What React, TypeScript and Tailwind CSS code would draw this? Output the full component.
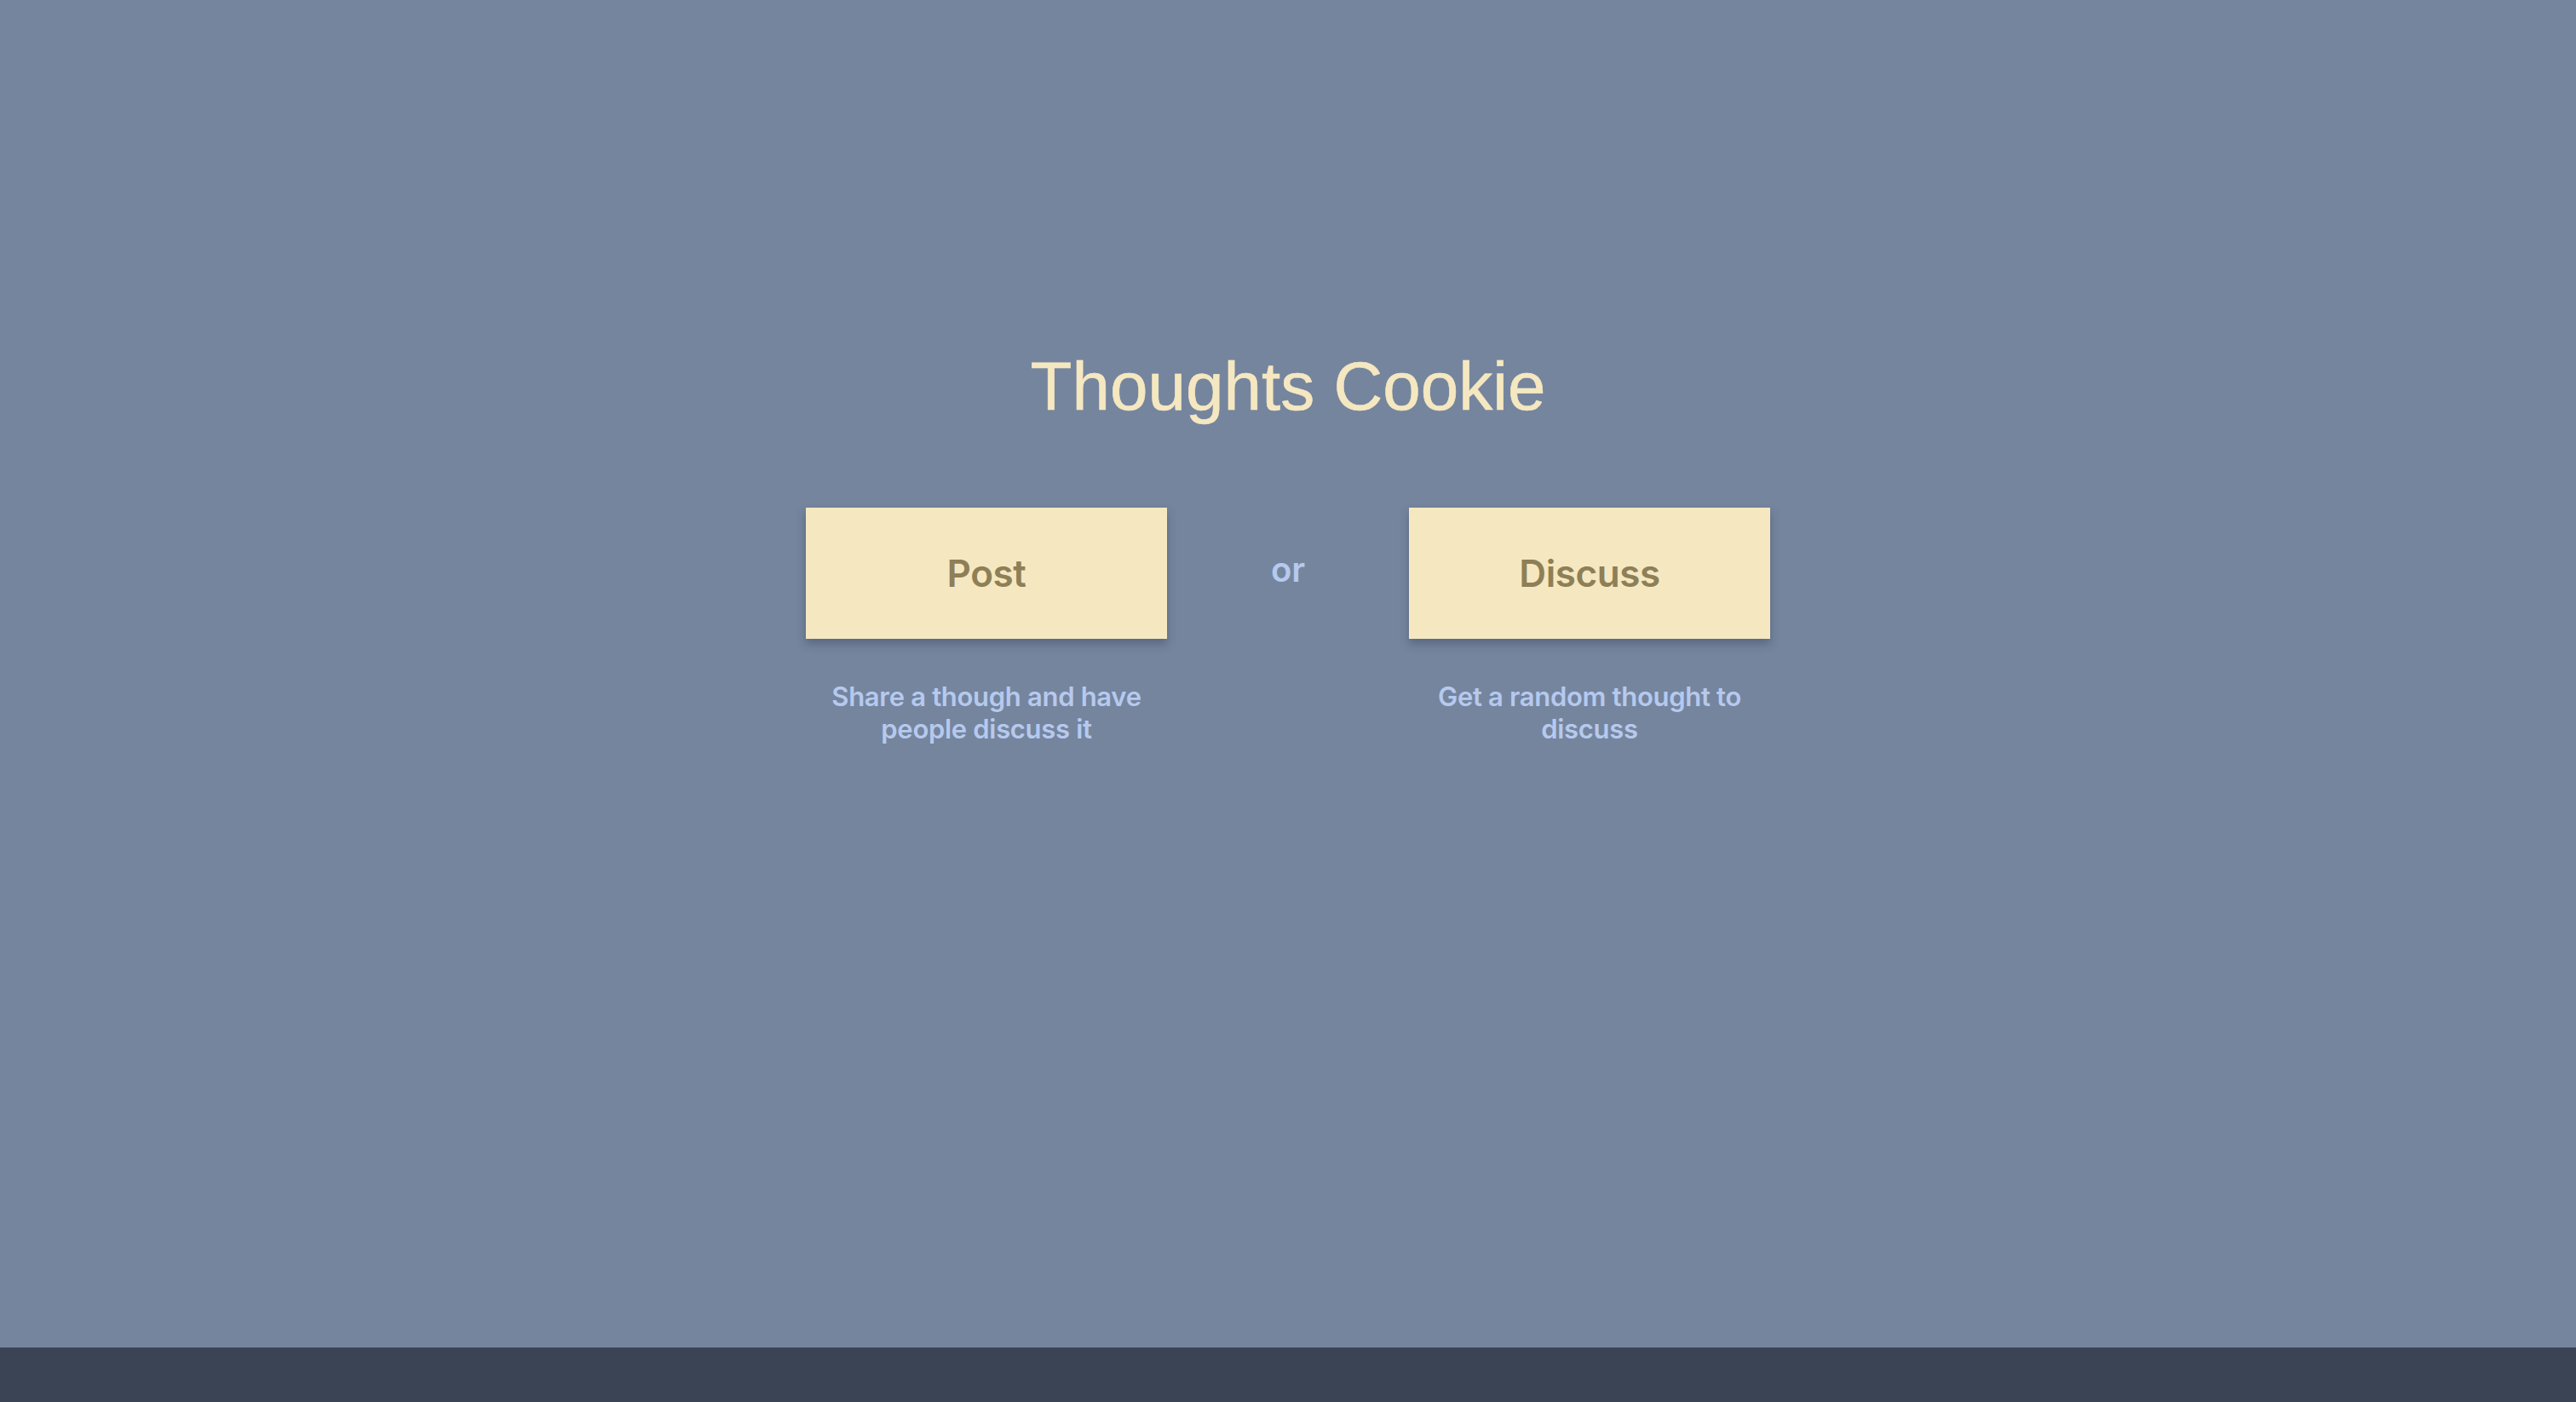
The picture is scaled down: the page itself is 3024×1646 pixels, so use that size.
const options = [
  { label: 'Post', hint: 'Share a though and have people discuss it' },
  { label: 'Discuss', hint: 'Get a random thought to discuss' },
];

const Choice = ({ label, hint }: { label: string; hint: string }) => (
  <div className="flex w-[424px] flex-col items-center">
    <button className="flex h-[154px] w-[424px] items-center justify-center bg-[#f5e8c1] text-[44px] font-semibold tracking-[-0.01em] text-[#8e7f57] shadow-[0_6px_10px_rgba(40,50,70,0.35)]">
      {label}
    </button>
    <p className="mt-[49px] w-[400px] text-center text-[31px] font-semibold leading-[38px] tracking-[-0.01em] text-[#b6c9ee]">
      {hint}
    </p>
  </div>
);

export default function App() {
  return (
    <div className="flex min-h-screen flex-col bg-[#75859e] font-['Inter',sans-serif]">
      <main className="flex flex-1 flex-col items-center pt-[414px]">
        <h1 className="font-['Liberation_Sans',Arial,sans-serif] text-[80px] font-normal leading-[80px] text-[#f5e8c1] [-webkit-text-stroke:0.6px_#f5e8c1]">
          Thoughts Cookie
        </h1>
        <div className="mt-[102px] flex items-start">
          <Choice {...options[0]} />
          <div className="flex h-[154px] w-[284px] items-center justify-center pb-[8px] text-[40px] font-semibold text-[#b6c9ee]">
            or
          </div>
          <Choice {...options[1]} />
        </div>
      </main>
      <footer className="h-[64px] bg-[#3b4455]" />
    </div>
  );
}
